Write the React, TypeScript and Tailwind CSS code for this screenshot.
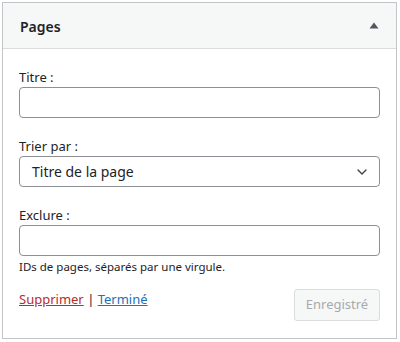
import { ChevronDown } from "lucide-react";

export default function App() {
    return (
        <div className="w-[400px] h-[342px] bg-white pt-[2px] pl-[2px]" style={{ fontFamily: '"Noto Sans", sans-serif' }}>
            <div className="w-[395px] h-[337px] border border-[#c3c4c7] bg-white flex flex-col">
                {/* header */}
                <div className="h-[46px] bg-[#f6f7f7] border-b border-[#dcdcde] flex items-center justify-between pl-[17px] pr-[17px]">
                    <h3 className="text-[14px] font-semibold text-[#1d2327] pt-[1px]">Pages</h3>
                    <svg width="10" height="7" viewBox="0 0 10 7">
                        <polygon points="5,0.5 9.5,6.5 0.5,6.5" fill="#50575e" />
                    </svg>
                </div>

                <div className="px-[16px] pt-[19px] text-[13px] text-[#1d2327]">
                    <div>
                        <label className="block leading-[18px] mb-[1px]">Titre :</label>
                        <input type="text" className="w-full h-[31px] border border-[#8c8f94] rounded-[4px] px-2 outline-none" />
                    </div>

                    <div className="mt-[19px]">
                        <label className="block leading-[18px] mb-[1px]">Trier par :</label>
                        <div className="relative w-full h-[31px] border border-[#8c8f94] rounded-[4px] flex items-center pl-[12px] text-[14px]">
                            <span>Titre de la page</span>
                            <ChevronDown size={16} strokeWidth={2} className="absolute right-[9px] top-[7px] text-[#3c434a]" />
                        </div>
                    </div>

                    <div className="mt-[19px]">
                        <label className="block leading-[18px] mb-[1px]">Exclure :</label>
                        <input type="text" className="w-full h-[31px] border border-[#8c8f94] rounded-[4px] px-2 outline-none" />
                        <p className="text-[11.5px] leading-[16px] mt-[3px] text-[#1d2327]">IDs de pages, séparés par une virgule.</p>
                    </div>

                    <div className="mt-[14px] flex justify-between items-start">
                        <div className="pt-[1px] leading-[18px]">
                            <a href="#" className="text-[#b32d2e] underline">Supprimer</a>
                            <span className="text-[#1d2327]"> | </span>
                            <a href="#" className="text-[#2271b1] underline">Terminé</a>
                        </div>
                        <button disabled className="w-[86px] h-[32px] bg-[#f6f7f7] border border-[#dcdcde] rounded-[3px] text-[#a7aaad] text-[13px]">Enregistré</button>
                    </div>
                </div>
            </div>
        </div>
    )
}
